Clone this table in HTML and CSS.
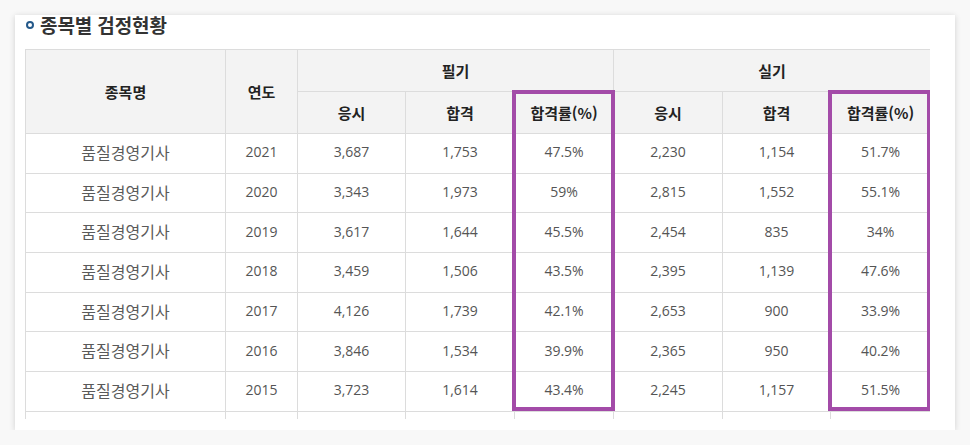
FILE: index.html
```html
<!DOCTYPE html>
<html lang="ko">
<head>
<meta charset="utf-8">
<link rel="stylesheet" href="styles.css">
</head>
<body>
<div class="card">
  <h2 class="title"><span class="bullet"></span>종목별 검정현황</h2>
  <div class="scroll">
    <table class="stats">
      <colgroup>
        <col class="c-name"><col class="c-year"><col class="c-a"><col class="c-b"><col class="c-c"><col class="c-b"><col class="c-a"><col class="c-d">
      </colgroup>
      <thead>
        <tr><th rowspan="2">종목명</th><th rowspan="2">연도</th><th colspan="3">필기</th><th colspan="3">실기</th></tr>
        <tr><th>응시</th><th>합격</th><th>합격률(%)</th><th>응시</th><th>합격</th><th>합격률(%)</th></tr>
      </thead>
      <tbody>
        <tr><td class="name">품질경영기사</td><td>2021</td><td>3,687</td><td>1,753</td><td>47.5%</td><td>2,230</td><td>1,154</td><td>51.7%</td></tr>
        <tr><td class="name">품질경영기사</td><td>2020</td><td>3,343</td><td>1,973</td><td>59%</td><td>2,815</td><td>1,552</td><td>55.1%</td></tr>
        <tr><td class="name">품질경영기사</td><td>2019</td><td>3,617</td><td>1,644</td><td>45.5%</td><td>2,454</td><td>835</td><td>34%</td></tr>
        <tr><td class="name">품질경영기사</td><td>2018</td><td>3,459</td><td>1,506</td><td>43.5%</td><td>2,395</td><td>1,139</td><td>47.6%</td></tr>
        <tr><td class="name">품질경영기사</td><td>2017</td><td>4,126</td><td>1,739</td><td>42.1%</td><td>2,653</td><td>900</td><td>33.9%</td></tr>
        <tr><td class="name">품질경영기사</td><td>2016</td><td>3,846</td><td>1,534</td><td>39.9%</td><td>2,365</td><td>950</td><td>40.2%</td></tr>
        <tr><td class="name">품질경영기사</td><td>2015</td><td>3,723</td><td>1,614</td><td>43.4%</td><td>2,245</td><td>1,157</td><td>51.5%</td></tr>
        <tr class="tail"><td></td><td></td><td></td><td></td><td></td><td></td><td></td><td></td></tr>
      </tbody>
    </table>
    <div class="mark mark-1"></div>
    <div class="mark mark-2"></div>
  </div>
</div>
</body>
</html>
```

FILE: styles.css
```css
html, body {
  margin: 0;
  padding: 0;
  background: #f8f8f8;
}
body {
  font-family: "Open Sans", "Noto Sans CJK KR", sans-serif;
  padding: 15px 0 0 15px;
  overflow: hidden;
}
.card {
  width: 940px;
  height: 415px;
  background: #fff;
  box-shadow: 0 1px 6px rgba(0, 0, 0, 0.16);
  box-sizing: border-box;
  padding: 0 25px 0 10px;
}
.title {
  margin: 0;
  height: 34px;
  display: flex;
  align-items: flex-start;
  font-family: "Noto Sans CJK KR", sans-serif;
  font-size: 19px;
  line-height: 19px;
  font-weight: 700;
  color: #333;
  letter-spacing: -0.1px;
}
.bullet {
  width: 4px;
  height: 4px;
  border: 2.5px solid #24598a;
  border-radius: 50%;
  margin: 6px 6px 0 1px;
  flex: none;
}
.scroll {
  position: relative;
  height: 370px;
  overflow: hidden;
}
.stats {
  width: 905px;
  table-layout: fixed;
  border-collapse: collapse;
  border: 1px solid #dcdcdc;
  border-bottom: 0;
}
.c-name { width: 200px; }
.c-year { width: 72px; }
.c-a { width: 108px; }
.c-b { width: 109px; }
.c-c { width: 99px; }
.c-d { width: 100px; }
.stats th, .stats td {
  border: 1px solid #dcdcdc;
  text-align: center;
  padding: 0;
}
.stats th {
  background: #f3f3f3;
  height: 40px;
  font-size: 15px;
  font-weight: 700;
  color: #222;
  font-family: "Noto Sans CJK KR", sans-serif;
  padding-bottom: 1px;
}
.stats td {
  height: 35.7px;
  font-size: 14px;
  color: #555;
  padding-bottom: 3px;
}
.stats td.name {
  font-family: "Noto Sans CJK KR", sans-serif;
  font-size: 16px;
  color: #5a5a5a;
}
.mark {
  position: absolute;
  top: 41px;
  width: 95px;
  height: 313px;
  border: 4px solid #a34ba8;
}
.mark-1 { left: 487px; }
.mark-2 { left: 803px; }
```
